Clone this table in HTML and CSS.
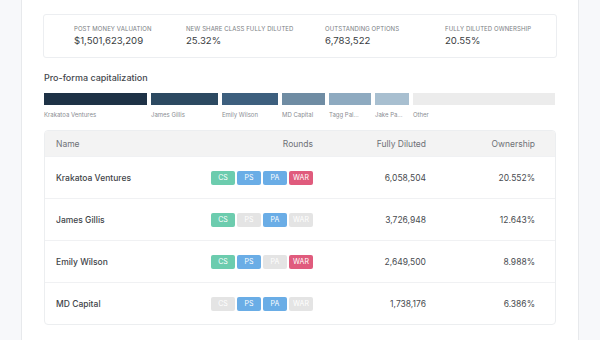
FILE: index.html
```html
<!DOCTYPE html>
<html>
<head>
<meta charset="utf-8">
<link rel="stylesheet" href="styles.css">
</head>
<body>
<div class="page">
  <div class="gutter"></div>
  <main class="panel">
    <section class="summary">
      <div class="stat"><div class="label">Post money valuation</div><div class="value">$1,501,623,209</div></div>
      <div class="stat"><div class="label">New share class fully diluted</div><div class="value">25.32%</div></div>
      <div class="stat"><div class="label">Outstanding options</div><div class="value">6,783,522</div></div>
      <div class="stat"><div class="label">Fully diluted ownership</div><div class="value">20.55%</div></div>
    </section>

    <h2 class="title">Pro-forma capitalization</h2>
    <div class="bars">
      <div class="seg" style="width:103px"><div class="bar c1"></div><div class="blabel">Krakatoa Ventures</div></div>
      <div class="seg" style="width:67px"><div class="bar c2"></div><div class="blabel">James Gillis</div></div>
      <div class="seg" style="width:56px"><div class="bar c3"></div><div class="blabel">Emily Wilson</div></div>
      <div class="seg" style="width:43px"><div class="bar c4"></div><div class="blabel">MD Capital</div></div>
      <div class="seg" style="width:42px"><div class="bar c5"></div><div class="blabel">Tagg Pal...</div></div>
      <div class="seg" style="width:34px"><div class="bar c6"></div><div class="blabel">Jake Pa...</div></div>
      <div class="seg grow"><div class="bar c7"></div><div class="blabel">Other</div></div>
    </div>

    <div class="table">
      <div class="row head">
        <div class="name">Name</div>
        <div class="rounds">Rounds</div>
        <div class="num">Fully Diluted</div>
        <div class="num">Ownership</div>
      </div>
      <div class="row">
        <div class="name strong">Krakatoa Ventures</div>
        <div class="rounds"><span class="b cs">CS</span><span class="b ps">PS</span><span class="b pa">PA</span><span class="b war">WAR</span></div>
        <div class="num">6,058,504</div>
        <div class="num">20.552%</div>
      </div>
      <div class="row">
        <div class="name strong">James Gillis</div>
        <div class="rounds"><span class="b cs">CS</span><span class="b off">PS</span><span class="b pa">PA</span><span class="b off">WAR</span></div>
        <div class="num">3,726,948</div>
        <div class="num">12.643%</div>
      </div>
      <div class="row">
        <div class="name strong">Emily Wilson</div>
        <div class="rounds"><span class="b cs">CS</span><span class="b ps">PS</span><span class="b off">PA</span><span class="b war">WAR</span></div>
        <div class="num">2,649,500</div>
        <div class="num">8.988%</div>
      </div>
      <div class="row">
        <div class="name strong">MD Capital</div>
        <div class="rounds"><span class="b off">CS</span><span class="b ps">PS</span><span class="b pa">PA</span><span class="b off">WAR</span></div>
        <div class="num">1,738,176</div>
        <div class="num">6.386%</div>
      </div>
    </div>
  </main>
</div>
</body>
</html>
```

FILE: styles.css
```css
* { box-sizing: border-box; margin: 0; padding: 0; }
html, body { width: 600px; height: 340px; overflow: hidden; }
body {
  background: #f7f8fa;
  font-family: Inter, "Noto Sans", sans-serif;
  color: #3a3d42;
}
.page { display: flex; height: 340px; }
.gutter { width: 21px; flex: none; }
.panel {
  width: 558px;
  flex: none;
  background: #fff;
  border-left: 1px solid #e7e9ec;
  border-right: 1px solid #e7e9ec;
  padding: 14px 21px 0 21px;
}
.summary {
  height: 44px;
  border: 1px solid #eceef1;
  border-radius: 3px;
  display: grid;
  grid-template-columns: 112px 139px 120px auto;
  padding: 10px 0 0 30px;
}
.label {
  font-size: 6px;
  text-transform: uppercase;
  color: #7a7e83;
  letter-spacing: 0.1px;
  line-height: 8px;
}
.value {
  font-size: 9.6px;
  color: #3a3d42;
  line-height: 13px;
  margin-top: 1px;
}
.title {
  font-size: 9px;
  font-weight: 500;
  color: #45484d;
  margin: 14px 0 0 1px;
  line-height: 12px;
}
.bars {
  display: flex;
  gap: 4px;
  margin: 9px 0 0 1px;
  width: 512px;
}
.seg { flex: none; }
.seg.grow { flex: 1; margin-right: 1px; }
.bar { height: 12px; }
.c1 { background: #1e3246; }
.c2 { background: #2c4961; }
.c3 { background: #3d5f7e; }
.c4 { background: #6f8ca3; }
.c5 { background: #8eaac0; }
.c6 { background: #a8bfd0; }
.c7 { background: #ececec; }
.blabel {
  font-size: 6px;
  color: #8a8d92;
  margin-top: 6px;
  white-space: nowrap;
  line-height: 7px;
}
.table {
  margin: 12px 0 0 1px;
  width: 512px;
  border: 1px solid #eceef0;
  border-radius: 4px;
  overflow: hidden;
}
.row {
  display: grid;
  grid-template-columns: 155px 102px 113px 109px;
  padding: 0 19px 0 11px;
  height: 42px;
  align-items: center;
  border-top: 1px solid #f0f1f3;
  font-size: 8.5px;
  color: #484b50;
}
.row.head {
  height: 25px;
  border-top: none;
  background: #f3f3f3;
  color: #6e7176;
  font-size: 8.5px;
}
.strong { font-weight: 500; color: #414449; }
.rounds { display: flex; justify-content: flex-end; gap: 2px; }
.num { text-align: right; }
.b {
  display: inline-block;
  width: 24px;
  height: 14px;
  line-height: 14px;
  text-align: center;
  font-size: 7px;
  color: #fff;
  border-radius: 2px;
}
.cs { background: #6cccae; }
.ps, .pa { background: #6aade6; }
.war { background: #e05b7d; }
.off { background: #e4e4e4; }
```
